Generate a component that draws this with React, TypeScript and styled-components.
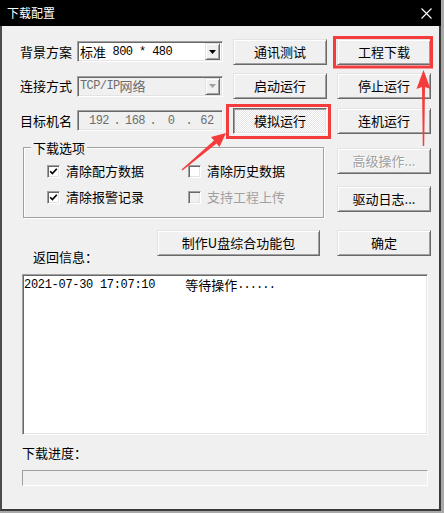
import React from "react";
import styled, { createGlobalStyle, css } from "styled-components";

const CJK = `"Noto Sans CJK SC", "Noto Sans CJK JP", "Noto Sans", sans-serif`;
const MONO = `"Liberation Mono", "DejaVu Sans Mono", monospace`;

const GlobalStyle = createGlobalStyle`
  html, body { margin: 0; padding: 0; }
  body { background: #a9a9a9; width: 444px; height: 513px; overflow: hidden; font-family: ${CJK}; }
  * { box-sizing: border-box; }
`;

const Page = styled.div`
  position: relative;
  width: 444px;
  height: 513px;
`;

const Window = styled.div`
  width: 441px;
  height: 511px;
  background: #f0f0f0;
  border-left: 2px solid #4c4c4c;
  border-right: 2px solid #3a3a3a;
  border-bottom: 2px solid #3a3a3a;
  display: flex;
  flex-direction: column;
  font-family: ${CJK};
  font-size: 13px;
  color: #000;
`;

const TitleBar = styled.div`
  height: 26px;
  margin: 0 -2px;
  background: #000;
  color: #fff;
  display: flex;
  align-items: center;
  justify-content: space-between;
  padding: 0 9px 0 7px;
  font-size: 12px;
  line-height: 16px;
`;

const Content = styled.div`
  flex: 1;
  padding: 13px 0 0 18px;
  display: flex;
  flex-direction: column;
`;

const TopGrid = styled.div`
  display: grid;
  grid-template-columns: 57px 156px 104px 94px;
  grid-template-rows: 25px 26px 25px;
  row-gap: 9px;
  align-items: center;
`;

const Label = styled.span`
  white-space: nowrap;
  line-height: 16px;
`;

const Field = styled.div<{ $disabled?: boolean; $white?: boolean }>`
  width: 146px;
  height: 21px;
  border: 1px solid;
  border-color: #a0a0a0 #ffffff #ffffff #a0a0a0;
  box-shadow: inset 1px 1px 0 #696969, inset -1px -1px 0 #e3e3e3;
  background: ${(p) => (p.$white ? "#ffffff" : "#f0f0f0")};
  color: ${(p) => (p.$disabled ? "#6d6d6d" : "#000")};
  display: flex;
  align-items: center;
  padding: 0 2px 0 2px;
  white-space: pre;
  line-height: 16px;
`;

const Han = styled.span`
  font-family: ${CJK};
  font-size: 13px;
`;

const Mono = styled.span<{ $spacing?: number }>`
  font-family: ${MONO};
  font-size: 12px;
  letter-spacing: ${(p) => p.$spacing ?? -0.6}px;
  white-space: pre;
`;

const DropButton = styled.span<{ $disabled?: boolean }>`
  margin-left: auto;
  width: 15px;
  height: 17px;
  background: #f0f0f0;
  border: 1px solid;
  border-color: #e3e3e3 #696969 #696969 #e3e3e3;
  box-shadow: inset 1px 1px 0 #ffffff, inset -1px -1px 0 #a0a0a0;
  display: flex;
  align-items: center;
  justify-content: center;
`;

const IpRow = styled.div`
  display: flex;
  align-items: center;
  padding-left: 5px;
`;

const Octet = styled.span`
  width: 28px;
  text-align: center;
  font-family: ${MONO};
  font-size: 12px;
  letter-spacing: -0.5px;
`;

const Dot = styled.span`
  width: 8px;
  text-align: center;
  font-family: ${MONO};
  font-size: 12px;
`;

const Button = styled.button<{ $wide?: boolean; $state?: "normal" | "pressed" | "disabled" }>`
  width: ${(p) => (p.$wide ? 163 : 94)}px;
  height: 26px;
  margin: 0;
  padding: 0;
  font-family: ${CJK};
  font-size: 13px;
  line-height: 16px;
  color: #000;
  background: #f0f0f0;
  border: 1px solid;
  border-color: #e3e3e3 #696969 #696969 #e3e3e3;
  box-shadow: inset 1px 1px 0 #ffffff, inset -1px -1px 0 #a0a0a0;
  white-space: nowrap;
  ${(p) =>
    p.$state === "pressed" &&
    css`
      border-color: #696969 #ffffff #ffffff #696969;
      box-shadow: inset 1px 1px 0 #a0a0a0, inset -1px -1px 0 #e3e3e3;
      background: repeating-conic-gradient(#ffffff 0% 25%, #e4e4e4 0% 50%) 0 0 / 2px 2px;
      padding-top: 1px;
    `}
  ${(p) =>
    p.$state === "disabled" &&
    css`
      color: #a0a0a0;
      text-shadow: 1px 1px 0 #ffffff;
    `}
`;

const MidGrid = styled.div`
  display: grid;
  grid-template-columns: 317px 94px;
  margin-top: 7px;
  align-items: start;
`;

const Group = styled.fieldset`
  margin: 0 0 0 3px;
  width: 301px;
  min-width: 0;
  padding: 0;
  border: 1px solid #a0a0a0;
  box-shadow: 1px 1px 0 #ffffff, inset 1px 1px 0 #ffffff;
`;

const Legend = styled.legend`
  margin-left: 7px;
  padding: 0 2px;
  font-size: 13px;
  line-height: 15px;
  background: #f0f0f0;
`;

const CheckGrid = styled.div`
  display: grid;
  grid-template-columns: 141px auto;
  grid-auto-rows: 26px;
  align-items: center;
  padding: 3px 0 7px 23px;
`;

const CheckItem = styled.label<{ $disabled?: boolean }>`
  display: flex;
  align-items: center;
  gap: 6px;
  line-height: 16px;
  white-space: nowrap;
  color: ${(p) => (p.$disabled ? "#a0a0a0" : "#000")};
`;

const Box = styled.span<{ $disabled?: boolean }>`
  width: 13px;
  height: 13px;
  border: 1px solid;
  border-color: #a0a0a0 #ffffff #ffffff #a0a0a0;
  box-shadow: inset 1px 1px 0 #696969, inset -1px -1px 0 #e3e3e3;
  background: ${(p) => (p.$disabled ? "#f0f0f0" : "#ffffff")};
  display: flex;
  align-items: center;
  justify-content: center;
  flex: none;
`;

const RightCol = styled.div`
  display: flex;
  flex-direction: column;
  gap: 12px;
  padding-top: 8px;
`;

const ActionRow = styled.div`
  display: flex;
  align-items: flex-start;
  margin-top: 12px;
`;

const ReturnLabel = styled.span`
  width: 137px;
  padding-left: 13px;
  margin-top: 19px;
  line-height: 16px;
  white-space: nowrap;
`;

const OkButton = styled(Button)`
  margin-left: 17px;
`;

const LogBox = styled.div`
  margin: 9px 0 0 2px;
  width: 406px;
  height: 161px;
  background: #ffffff;
  border: 1px solid;
  border-color: #a0a0a0 #ffffff #ffffff #a0a0a0;
  box-shadow: inset 1px 1px 0 #696969, inset -1px -1px 0 #e3e3e3;
  padding: 1px 1px 0 1px;
`;

const LogLine = styled.div`
  display: flex;
  align-items: center;
  height: 17px;
  line-height: 16px;
  white-space: pre;
`;

const LogMessage = styled.span`
  margin-left: 30px;
  font-family: ${CJK};
  font-size: 13px;
`;

const ProgressLabel = styled.span`
  margin: 10px 0 0 2px;
  line-height: 16px;
`;

const Progress = styled.div`
  margin: 9px 0 0 2px;
  width: 406px;
  height: 16px;
  border: 1px solid;
  border-color: #a0a0a0 #ffffff #ffffff #a0a0a0;
  background: #f0f0f0;
`;

const Overlay = styled.svg`
  position: absolute;
  left: 0;
  top: 0;
  pointer-events: none;
`;

const Check = () => (
  <svg width="9" height="9" viewBox="0 0 9 9">
    <polyline points="1.2,4.2 3.4,6.6 7.8,1.8" fill="none" stroke="#000" strokeWidth="1.7" />
  </svg>
);

const Arrow = ({ color }: { color: string }) => (
  <svg width="7" height="4" viewBox="0 0 7 4">
    <polygon points="0,0 7,0 3.5,4" fill={color} />
  </svg>
);

const CheckOption = ({ label, checked, disabled }: { label: string; checked?: boolean; disabled?: boolean }) => (
  <CheckItem $disabled={disabled}>
    <Box $disabled={disabled}>{checked && <Check />}</Box>
    {label}
  </CheckItem>
);

export default function App() {
  return (
    <Page>
      <GlobalStyle />
      <Window>
        <TitleBar>
          <span>下载配置</span>
          <svg width="11" height="11" viewBox="0 0 11 11">
            <path d="M0.5 0.5 L10.5 10.5 M10.5 0.5 L0.5 10.5" stroke="#fff" strokeWidth="1.1" />
          </svg>
        </TitleBar>
        <Content>
          <TopGrid>
            <Label>背景方案</Label>
            <Field $white>
              <Han>标准</Han>
              <Mono> 800 * 480</Mono>
              <DropButton>
                <Arrow color="#000" />
              </DropButton>
            </Field>
            <Button>通讯测试</Button>
            <Button>工程下载</Button>

            <Label>连接方式</Label>
            <Field $disabled>
              <Mono>TCP/IP</Mono>
              <Han>网络</Han>
              <DropButton $disabled>
                <Arrow color="#a0a0a0" />
              </DropButton>
            </Field>
            <Button>启动运行</Button>
            <Button>停止运行</Button>

            <Label>目标机名</Label>
            <Field $disabled>
              <IpRow>
                <Octet>192</Octet>
                <Dot>.</Dot>
                <Octet>168</Octet>
                <Dot>.</Dot>
                <Octet>0</Octet>
                <Dot>.</Dot>
                <Octet>62</Octet>
              </IpRow>
            </Field>
            <Button $state="pressed">模拟运行</Button>
            <Button>连机运行</Button>
          </TopGrid>

          <MidGrid>
            <Group>
              <Legend>下载选项</Legend>
              <CheckGrid>
                <CheckOption label="清除配方数据" checked />
                <CheckOption label="清除历史数据" />
                <CheckOption label="清除报警记录" checked />
                <CheckOption label="支持工程上传" disabled />
              </CheckGrid>
            </Group>
            <RightCol>
              <Button $state="disabled">高级操作...</Button>
              <Button>驱动日志...</Button>
            </RightCol>
          </MidGrid>

          <ActionRow>
            <ReturnLabel>返回信息：</ReturnLabel>
            <Button $wide>制作U盘综合功能包</Button>
            <OkButton>确定</OkButton>
          </ActionRow>

          <LogBox>
            <LogLine>
              <Mono $spacing={-0.3}>2021-07-30 17:07:10</Mono>
              <LogMessage>等待操作</LogMessage>
              <Mono $spacing={-0.9}>......</Mono>
            </LogLine>
          </LogBox>

          <ProgressLabel>下载进度：</ProgressLabel>
          <Progress />
        </Content>
      </Window>

      <Overlay width="444" height="513" viewBox="0 0 444 513">
        <rect x="334.5" y="37.5" width="97" height="29.5" fill="none" stroke="#f43c3c" strokeWidth="3" />
        <rect x="227.5" y="105.5" width="102" height="32" fill="none" stroke="#f43c3c" strokeWidth="3" />
        <polygon
          points="226,133 219.5,147 216.6,143.6 182.4,170.6 181.6,169.4 214,140.4 211,137"
          fill="#f43c3c"
        />
        <polygon points="423.5,70 430.5,89 425,87 424.2,146 422.8,146 422,87 416.5,89" fill="#f43c3c" />
      </Overlay>
    </Page>
  );
}
